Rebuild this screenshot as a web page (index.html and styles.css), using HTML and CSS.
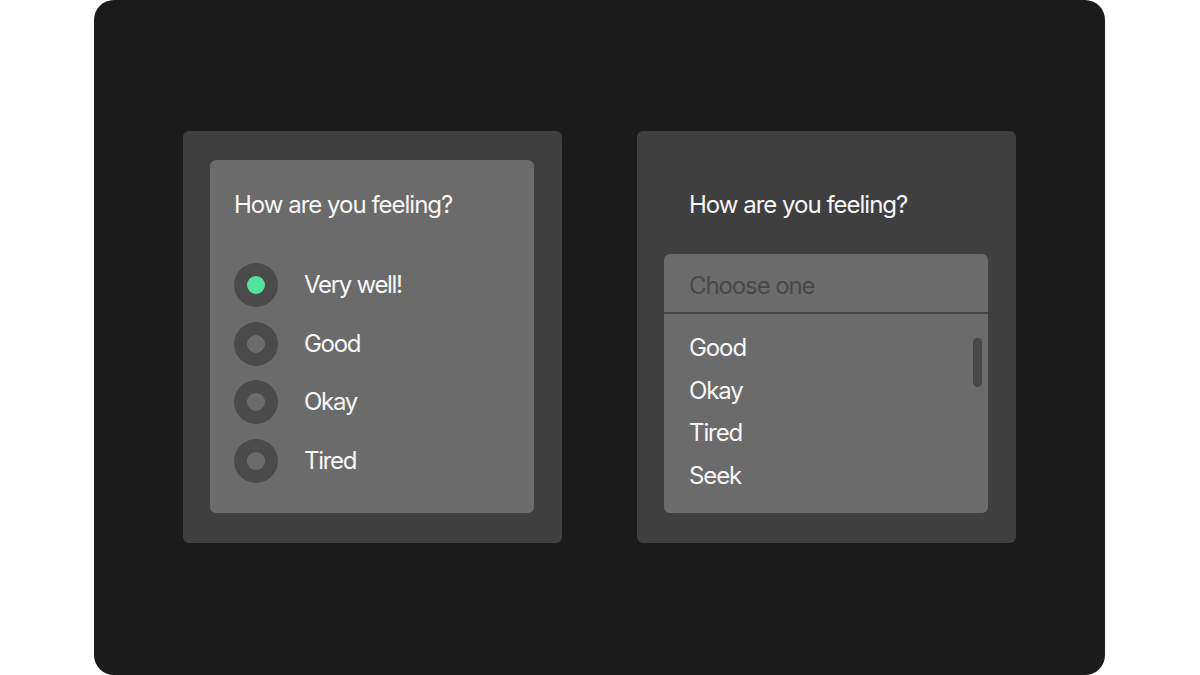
FILE: index.html
```html
<!DOCTYPE html>
<html lang="en">
<head>
<meta charset="utf-8">
<title>How are you feeling?</title>
<link rel="stylesheet" href="styles.css">
</head>
<body>
<main class="stage">
  <section class="card">
    <div class="inner">
      <h2 class="title">How are you feeling?</h2>
      <ul class="radios">
        <li class="radio-row"><span class="radio checked"></span><span class="label">Very well!</span></li>
        <li class="radio-row"><span class="radio"></span><span class="label">Good</span></li>
        <li class="radio-row"><span class="radio"></span><span class="label">Okay</span></li>
        <li class="radio-row"><span class="radio"></span><span class="label">Tired</span></li>
      </ul>
    </div>
  </section>
  <section class="card card-select">
    <h2 class="title title-out">How are you feeling?</h2>
    <div class="dropdown">
      <div class="dd-head">Choose one</div>
      <ul class="dd-list">
        <li>Good</li>
        <li>Okay</li>
        <li>Tired</li>
        <li>Seek</li>
        <span class="scrollbar"></span>
      </ul>
    </div>
  </section>
</main>
</body>
</html>
```
FILE: styles.css
```css
* { box-sizing: border-box; }
html, body { margin: 0; padding: 0; background: #ffffff; }
body {
  font-family: Inter, "Liberation Sans", sans-serif;
  color: #f7f7f7;
}
.stage {
  margin: 0 0 0 94px;
  width: 1011px;
  height: 675px;
  background: #1b1b1b;
  border-radius: 20px;
  display: flex;
  gap: 75px;
  padding: 131px 0 0 89px;
}
.card {
  width: 379px;
  height: 412px;
  background: #3f3f3f;
  border-radius: 6px;
  padding: 29px 28px 30px 27px;
}
.inner {
  height: 100%;
  background: #6b6b6b;
  border-radius: 6px;
  padding: 30px 24px 0 24px;
}
.title {
  margin: 0;
  font-size: 24px;
  font-weight: 400;
  line-height: 30px;
  letter-spacing: -1px;
  color: #f7f7f7;
}
.radios {
  list-style: none;
  margin: 43px 0 0 0;
  padding: 0;
  display: flex;
  flex-direction: column;
  gap: 14.5px;
}
.radio-row {
  display: flex;
  align-items: center;
  height: 44px;
}
.radio {
  width: 44px;
  height: 44px;
  border-radius: 50%;
  background: #4b4b4b;
  display: flex;
  align-items: center;
  justify-content: center;
  flex: none;
}
.radio::after {
  content: "";
  width: 18px;
  height: 18px;
  border-radius: 50%;
  background: #6b6b6b;
}
.radio.checked::after { background: #52e39b; }
.label {
  margin-left: 26px;
  font-size: 24px;
  letter-spacing: -1.3px;
  line-height: 30px;
}
.card-select {
  padding-top: 59px;
  display: flex;
  flex-direction: column;
}
.title-out { padding-left: 25px; }
.dropdown {
  margin-top: 34px;
  flex: 1;
  background: #6b6b6b;
  border-radius: 6px;
  display: flex;
  flex-direction: column;
}
.dd-head {
  height: 60px;
  padding: 17px 25px 0;
  font-size: 24px;
  letter-spacing: -1.1px;
  line-height: 30px;
  color: #484848;
  border-bottom: 2px solid #464646;
}
.dd-list {
  position: relative;
  list-style: none;
  margin: 0;
  padding: 13px 25px 0;
}
.dd-list li {
  font-size: 24px;
  letter-spacing: -1.1px;
  line-height: 42.5px;
  height: 42.5px;
}
.scrollbar {
  position: absolute;
  right: 6px;
  top: 24px;
  width: 9px;
  height: 49px;
  border-radius: 5px;
  background: #484848;
}
```
